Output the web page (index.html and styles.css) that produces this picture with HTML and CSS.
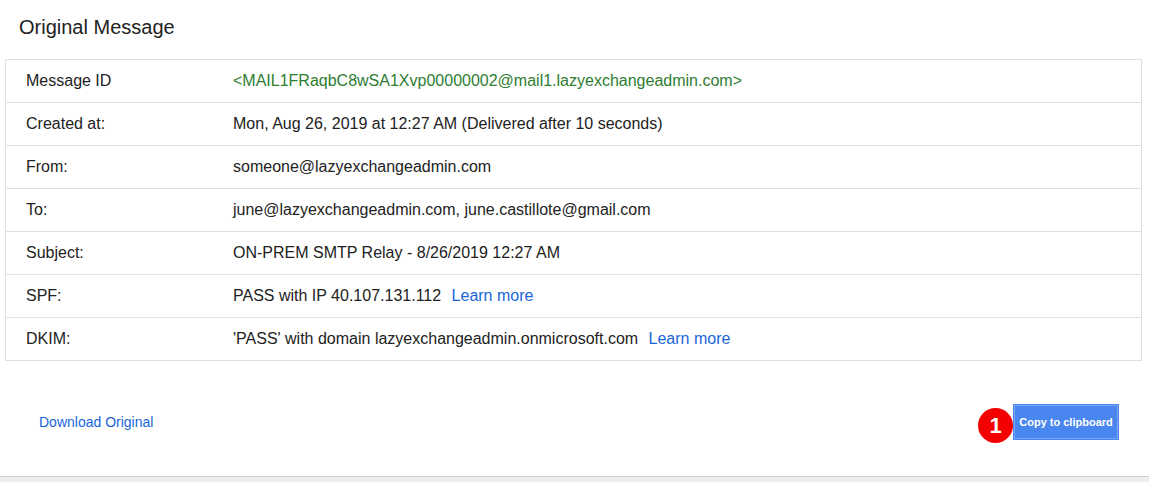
FILE: index.html
```html
<!DOCTYPE html>
<html lang="en">
<head>
    <meta charset="UTF-8">
    <title>Original Message</title>
    <link rel="stylesheet" href="styles.css">
</head>
<body>
    <div class="page">
        <div class="title">Original Message</div>

        <table class="details">
            <tr>
                <td class="label">Message ID</td>
                <td class="value msgid">&lt;MAIL1FRaqbC8wSA1Xvp00000002@mail1.lazyexchangeadmin.com&gt;</td>
            </tr>
            <tr>
                <td class="label">Created at:</td>
                <td class="value">Mon, Aug 26, 2019 at 12:27 AM (Delivered after 10 seconds)</td>
            </tr>
            <tr>
                <td class="label">From:</td>
                <td class="value">someone@lazyexchangeadmin.com</td>
            </tr>
            <tr>
                <td class="label">To:</td>
                <td class="value">june@lazyexchangeadmin.com, june.castillote@gmail.com</td>
            </tr>
            <tr>
                <td class="label">Subject:</td>
                <td class="value">ON-PREM SMTP Relay - 8/26/2019 12:27 AM</td>
            </tr>
            <tr>
                <td class="label">SPF:</td>
                <td class="value">PASS with IP 40.107.131.112 <a class="learn" href="#">Learn more</a></td>
            </tr>
            <tr>
                <td class="label">DKIM:</td>
                <td class="value">'PASS' with domain lazyexchangeadmin.onmicrosoft.com <a class="learn" href="#">Learn more</a></td>
            </tr>
        </table>

        <div class="actions">
            <a class="download" href="#">Download Original</a>
            <div class="copy-wrap">
                <span class="badge">1</span>
                <button class="copy">Copy to clipboard</button>
            </div>
        </div>
    </div>
    <div class="bottom-bar"></div>
</body>
</html>
```

FILE: styles.css
```css
body {
    margin: 0;
    font-family: "Liberation Sans", Arial, sans-serif;
    background-color: #fff;
    color: #222;
}
.page {
    height: 476px;
    overflow: hidden;
}
.title {
    padding: 16px 19px 0;
    height: 59px;
    box-sizing: border-box;
    font-size: 20px;
    color: #222;
}
.details {
    margin: 0 7px 0 5px;
    width: calc(100% - 12px);
    border-collapse: collapse;
    border: 1px solid #e0e0e0;
    font-size: 16px;
}
.details td {
    height: 42px;
    padding: 0;
    border-top: 1px solid #e0e0e0;
}
.label {
    width: 207px;
    padding-left: 20px !important;
}
.msgid {
    color: #2e7d32;
}
.learn {
    color: #1a66d9;
    text-decoration: none;
    margin-left: 6px;
}
.actions {
    display: flex;
    justify-content: space-between;
    align-items: center;
    padding: 44px 31px 0 39px;
}
.download {
    color: #1a66d9;
    text-decoration: none;
    font-size: 14px;
}
.copy-wrap {
    position: relative;
}
.copy {
    background-color: #4a86f0;
    color: white;
    border: 1px solid #7aa6f5;
    box-shadow: 0 0 0 1px #4a86f0;
    font-family: "Liberation Sans", Arial, sans-serif;
    font-weight: bold;
    font-size: 11px;
    height: 34px;
    width: 104px;
    padding: 0;
    cursor: pointer;
}
.badge {
    position: absolute;
    left: -36px;
    top: 3px;
    width: 35px;
    height: 35px;
    border-radius: 50%;
    background-color: #f40000;
    color: white;
    font-weight: bold;
    font-size: 22px;
    display: flex;
    align-items: center;
    justify-content: center;
}
.bottom-bar {
    height: 6px;
    background-color: #eee;
    border-top: 1px solid #ccc;
}
```
